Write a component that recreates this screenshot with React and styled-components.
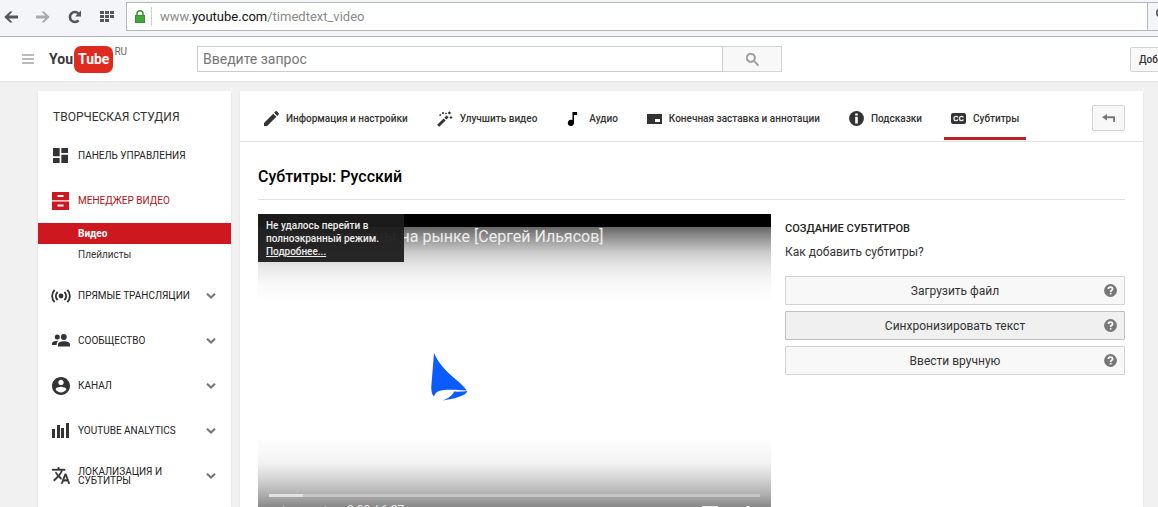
import React from "react";
import styled, { createGlobalStyle } from "styled-components";

const Global = createGlobalStyle`
  *, *::before, *::after { box-sizing: border-box; }
  body { margin: 0; background: #f1f1f1; font-family: Roboto, "Liberation Sans", sans-serif; color: #333; }
  button, input { font-family: inherit; margin: 0; }
  button { cursor: pointer; }
  h1, h2, h3, p, ul { margin: 0; padding: 0; }
  ul { list-style: none; }
  a { color: inherit; text-decoration: none; }
`;

/* ---------- icons ---------- */

const Svg = styled.svg`
  display: block;
  flex: none;
  fill: currentColor;
`;

const Icon = ({ w = 16, h = 16, box = "0 0 24 24", children }) => (
  <Svg width={w} height={h} viewBox={box} aria-hidden="true">{children}</Svg>
);

const ArrowIcon = () => (
  <Icon w={14} h={12} box="0 0 14 12">
    <path d="M6 0.5h2.6L4.8 4.6H14v2.8H4.8l3.8 4.1H6L0.3 6z" />
  </Icon>
);
const ForwardIcon = () => (
  <Icon w={14} h={12} box="0 0 14 12">
    <path d="M8 0.5H5.4l3.8 4.1H0v2.8h9.2l-3.8 4.1H8L13.7 6z" />
  </Icon>
);
const ReloadIcon = () => (
  <Icon w={14} h={14} box="0 0 14 14">
    <path d="M10.6 10.4A5 5 0 1 1 10.4 3.4" fill="none" stroke="currentColor" strokeWidth="2.6" />
    <path d="M13 0.6V6.6H7z" />
  </Icon>
);
const GridIcon = () => (
  <Icon w={14} h={11} box="0 0 14 11">
    <path d="M0 0h4v3H0zM5 0h4v3H5zM10 0h4v3h-4zM0 4h4v3H0zM5 4h4v3H5zM10 4h4v3h-4zM0 8h4v3H0zM5 8h4v3H5z" />
  </Icon>
);
const LockIcon = () => (
  <Icon w={10} h={13} box="0 0 10 13">
    <path d="M2 6V3.8a3 3 0 0 1 6 0V6" fill="none" stroke="#37912f" strokeWidth="1.5" />
    <rect x="0.5" y="5.5" width="9" height="7" fill="#43a63c" stroke="#37912f" />
  </Icon>
);
const MenuIcon = () => (
  <Icon w={12} h={10} box="0 0 12 10">
    <path d="M0 0h12v2H0zM0 4h12v2H0zM0 8h12v2H0z" />
  </Icon>
);
const SearchIcon = () => (
  <Icon w={13} h={13} box="3 3 17.5 17.5">
    <path d="M15.5 14h-.79l-.28-.27C15.41 12.59 16 11.11 16 9.5 16 5.91 13.09 3 9.5 3S3 5.91 3 9.5 5.91 16 9.5 16c1.61 0 3.09-.59 4.23-1.57l.27.28v.79l5 4.99L20.49 19l-4.99-5zm-6 0C7.01 14 5 11.99 5 9.5S7.01 5 9.5 5 14 7.01 14 9.5 11.99 14 9.5 14z" stroke="currentColor" strokeWidth="0.6" />
  </Icon>
);
const DashboardIcon = () => (
  <Icon w={15} h={15} box="3 3 18 18">
    <path d="M3 13h8V3H3v10zm0 8h8v-6H3v6zm10 0h8V11h-8v10zm0-18v6h8V3h-8z" />
  </Icon>
);
const DrawersIcon = () => (
  <Icon w={17} h={18} box="0 0 17 18">
    <path fillRule="evenodd" d="M0 0h17v8.2H0zM5.5 3v2h6V3zM0 9.4h17V18H0zM5.5 12.4v2h6v-2z" />
  </Icon>
);
const LiveIcon = () => (
  <Icon w={20} h={14} box="0 0 20 14">
    <circle cx="10" cy="7" r="2.4" />
    <g fill="none" stroke="currentColor" strokeWidth="1.8">
      <path d="M6.6 3a5.4 5.4 0 0 0 0 8M13.4 3a5.4 5.4 0 0 1 0 8" />
      <path d="M3.6 0.8a9 9 0 0 0 0 12.4M16.4 0.8a9 9 0 0 1 0 12.4" />
    </g>
  </Icon>
);
const PeopleIcon = () => (
  <Icon w={18} h={13} box="0 0 18 13">
    <circle cx="5.3" cy="3" r="2.5" />
    <circle cx="11.8" cy="3" r="2.9" />
    <path d="M6 12.6V10.4C6 8 9 7.2 12 7.2s6 .8 6 3.2v2.2zM0 11V9.4C0 7.6 3 6.6 6.6 6.8 5.2 7.8 4.6 9 4.6 11z" />
  </Icon>
);
const AccountIcon = () => (
  <Icon w={18} h={18} box="2 2 20 20">
    <path d="M12 2C6.48 2 2 6.48 2 12s4.48 10 10 10 10-4.48 10-10S17.52 2 12 2zm0 3c1.66 0 3 1.34 3 3s-1.34 3-3 3-3-1.34-3-3 1.34-3 3-3zm0 14.2c-2.5 0-4.71-1.28-6-3.22.03-1.99 4-3.08 6-3.08 1.99 0 5.97 1.09 6 3.08-1.29 1.94-3.5 3.22-6 3.22z" />
  </Icon>
);
const AnalyticsIcon = () => (
  <Icon w={17} h={15} box="0 0 17 15">
    <path d="M0 6h3v9H0zM5 2h3v13H5zM9 5h3v10H9zM14 0h3v15h-3z" />
  </Icon>
);
const TranslateIcon = () => (
  <Icon w={18} h={17} box="1 2 22 20">
    <path stroke="currentColor" strokeWidth="0.4" d="M12.87 15.07l-2.54-2.51.03-.03c1.74-1.94 2.98-4.17 3.71-6.53H17V4h-7V2H8v2H1v1.99h11.17C11.5 7.92 10.44 9.75 9 11.35 8.07 10.32 7.3 9.19 6.69 8h-2c.73 1.63 1.73 3.17 2.98 4.56l-5.09 5.02L4 19l5-5 3.11 3.11.76-2.04zM18.5 10h-2L12 22h2l1.12-3h4.75L21 22h2l-4.5-12zm-2.62 7l1.62-4.33L19.12 17h-3.24z" />
  </Icon>
);
const ChevronIcon = () => (
  <Icon w={10} h={6} box="0 0 10 6">
    <path d="M1 0.7L5 4.5 9 0.7" fill="none" stroke="currentColor" strokeWidth="2.1" />
  </Icon>
);
const PencilIcon = () => (
  <Icon w={15} h={15} box="3 3 18 18">
    <path d="M3 17.25V21h3.75L17.81 9.94l-3.75-3.75L3 17.25zM20.71 7.04c.39-.39.39-1.02 0-1.41l-2.34-2.34c-.39-.39-1.02-.39-1.41 0l-1.83 1.83 3.75 3.75 1.83-1.83z" />
  </Icon>
);
const WandIcon = () => (
  <Icon w={16} h={16} box="0 0 16 16">
    <path d="M1.2 14.8L7.6 8.4" fill="none" stroke="currentColor" strokeWidth="2.8" />
    <path d="M8.4 7.6L10.6 5.4" fill="none" stroke="currentColor" strokeWidth="2.8" />
    <path d="M12.4 0.2l1.7 1.7-1.7 1.7-1.7-1.7zM6 .8l1.3 1.3L6 3.4 4.7 2.1zM14 4.9l1.5 1.5L14 7.9l-1.5-1.5zM3.2 2.9l1.2 1.2-1.2 1.2L2 4.1zM9 1.6l1 1-1 1-1-1z" />
  </Icon>
);
const NoteIcon = () => (
  <Icon w={16} h={14} box="4 3 20 18">
    <path fill="#000" d="M12 3v10.55c-.59-.34-1.27-.55-2-.55-2.21 0-4 1.79-4 4s1.79 4 4 4 4-1.79 4-4V7h4V3h-6z" />
  </Icon>
);
const EndScreenIcon = () => (
  <Icon w={15} h={10} box="0 0 15 10">
    <path fillRule="evenodd" d="M0 0h15v10H0zM8 5v3h5V5z" />
  </Icon>
);
const InfoIcon = () => (
  <Icon w={15} h={15} box="0 0 15 15">
    <circle cx="7.5" cy="7.5" r="7.4" />
    <path fill="#fff" d="M6.2 2.4h2.6v2.2H6.2zM6.2 5.7h2.6v6.7H6.2z" />
  </Icon>
);
const CcIcon = () => (
  <Icon w={15} h={11} box="0 0 15 11">
    <rect width="15" height="11" rx="2" />
    <path d="M6.8 4.6C6.6 2.9 2.9 2.7 2.9 5.5S6.6 8.1 6.8 6.4M12.3 4.6C12.1 2.9 8.4 2.7 8.4 5.5S12.1 8.1 12.3 6.4" fill="none" stroke="#e4e4e4" strokeWidth="1.4" />
  </Icon>
);
const ReturnIcon = () => (
  <Icon w={13} h={8} box="0 0 13 8">
    <path d="M5 0v2.2H13V8h-1.800V4.200H5v2.400L0 3.300z" />
  </Icon>
);
const HelpIcon = () => (
  <Icon w={13} h={13} box="0 0 13 13">
    <circle cx="6.5" cy="6.5" r="6.4" />
    <path d="M4.4 5.1C4.4 2.4 8.6 2.5 8.6 4.9 8.6 6.3 6.6 6.3 6.6 8" fill="none" stroke="#fff" strokeWidth="1.7" />
    <path fill="#fff" d="M5.8 8.9h1.7v1.6H5.8z" />
  </Icon>
);
const SailIcon = () => (
  <Icon w={37} h={48} box="0 0 37 48">
    <path fill="#0b5cff" d="M3 0C8 12 18 21 28 29 32 33 35 36 35.5 37.4 27 37 14 36 8 38 5 39 4 41 3 43.5 0 41 0 34 .6 30z" />
    <path fill="#0b5cff" d="M23 38.6C29 38.8 34 38.4 36.5 38 35 43 22 46 12 47.5 18 45 22 42 23 38.6z" />
  </Icon>
);
const PlayIcon = () => (
  <Icon w={12} h={16} box="0 0 12 16">
    <path d="M0 0l12 8-12 8z" />
  </Icon>
);
const VolumeIcon = () => (
  <Icon w={16} h={16} box="0 0 16 16">
    <path d="M0 5h4l5-5v16l-5-5H0zM11 4c3 2 3 6 0 8z" />
  </Icon>
);
const SubtitlesIcon = () => (
  <Icon w={16} h={16} box="0 0 16 16">
    <path d="M0 0h16v14H0z" />
  </Icon>
);
const GearIcon = () => (
  <Icon w={16} h={16} box="0 0 16 16">
    <path d="M6.5 0h3v2.5l4 1.5 1.5 4-1.5 4-5.5 3-5.5-3L1 8l1.5-4 4-1.5z" />
  </Icon>
);

/* ---------- browser bar ---------- */

const Page = styled.div`
  height: 100vh;
  overflow: hidden;
  display: flex;
  flex-direction: column;
`;

const BrowserBar = styled.div`
  flex: none;
  display: flex;
  align-items: flex-start;
  height: 37px;
  padding-top: 2px;
  background: #f4f5f8;
  border-bottom: 1px solid #b3b5ba;
  overflow: hidden;
`;

const BrowserNav = styled.nav`
  flex: none;
  display: flex;
  align-items: center;
  gap: 18px;
  width: 126px;
  height: 29px;
  padding-left: 4px;
`;

const BareButton = styled.button`
  display: flex;
  padding: 0;
  border: 0;
  background: none;
  color: ${(p) => p.$color || "#55565a"};
`;

const Address = styled.div`
  flex: 1;
  display: flex;
  align-items: center;
  height: 29px;
  padding-left: 8px;
  background: #fff;
  border: 1px solid #b3b5ba;
`;

const Url = styled.div`
  height: 19px;
  margin-left: 6px;
  padding-left: 8px;
  border-left: 1px solid #cfcfcf;
  font-size: 13px;
  line-height: 19px;
  color: #8a8a8a;
  outline: 0;
  b { font-weight: 400; color: #111; }
`;

const SearchEngine = styled.button`
  flex: none;
  display: flex;
  align-items: center;
  width: 30px;
  height: 29px;
  margin-right: -20px;
  padding: 0 0 4px 8px;
  border: 1px solid #b3b5ba;
  border-left: 0;
  background: #f4f5f8;
  color: #555;
`;

/* ---------- masthead ---------- */

const Masthead = styled.header`
  flex: none;
  display: flex;
  align-items: center;
  height: 45px;
  padding-left: 22px;
  background: #fff;
  border-bottom: 1px solid #e5e5e5;
  overflow: hidden;
`;

const Brand = styled.div`
  flex: none;
  display: flex;
  align-items: center;
  gap: 15px;
  width: 175px;
`;

const Logo = styled.a`
  display: flex;
  align-items: center;
  gap: 1px;
  font-size: 14px;
  line-height: 27px;
  font-weight: 700;
  color: #393536;
`;

const LogoTube = styled.span`
  padding: 0 4px;
  border-radius: 7px;
  background: #e02a20;
  color: #fff;
`;

const Country = styled.sup`
  align-self: flex-start;
  font-size: 10px;
  line-height: 12px;
  font-weight: 400;
  color: #666;
`;

const Search = styled.form`
  flex: 0 1 585px;
  display: flex;
  height: 26px;
`;

const SearchInput = styled.input`
  flex: 1;
  min-width: 0;
  height: 26px;
  padding: 0 5px;
  border: 1px solid #ccc;
  border-radius: 0;
  background: #fff;
  font-size: 14px;
  outline: 0;
  &::placeholder { color: #767676; opacity: 1; }
`;

const SearchButton = styled.button`
  display: flex;
  align-items: center;
  justify-content: center;
  width: 59px;
  padding: 0;
  border: 1px solid #d3d3d3;
  border-left: 0;
  background: #f8f8f8;
  color: #9a9a9a;
`;

const UploadButton = styled.button`
  flex: none;
  width: 112px;
  height: 25px;
  margin: 0 -84px 0 auto;
  padding: 0 8px;
  border: 1px solid #d3d3d3;
  border-radius: 2px;
  background: #f8f8f8;
  font-size: 10px;
  font-weight: 500;
  text-align: left;
  color: #333;
`;

/* ---------- sidebar ---------- */

const Body = styled.div`
  flex: 1;
  min-height: 0;
  display: flex;
  gap: 9px;
  padding: 9px 15px 0 38px;
`;

const Sidebar = styled.nav`
  flex: none;
  width: 193px;
  background: #fff;
  box-shadow: 0 1px 2px rgba(0, 0, 0, 0.1);
  overflow: hidden;
`;

const SidebarTitle = styled.h2`
  padding: 17px 15px 7px;
  font-size: 12px;
  line-height: 18px;
  font-weight: 400;
  color: #333;
`;

const NavLink = styled.a`
  display: flex;
  align-items: center;
  height: 45px;
  padding-right: 15px;
  font-size: 10px;
  line-height: 9px;
  color: ${(p) => (p.$active ? "#b31217" : "#222")};
`;

const NavIcon = styled.span`
  flex: none;
  display: flex;
  justify-content: center;
  width: 45px;
  margin-right: -5px;
  color: ${(p) => (p.$active ? "#cc181e" : "#333")};
`;

const NavText = styled.span`
  flex: 1;
`;

const NavChevron = styled.span`
  color: #777;
`;

const SubList = styled.ul`
  padding-bottom: 8px;
`;

const SubLink = styled.a`
  display: block;
  padding-left: 40px;
  font-size: 10px;
  line-height: 21px;
  font-weight: ${(p) => (p.$active ? 700 : 400)};
  color: ${(p) => (p.$active ? "#fff" : "#333")};
  background: ${(p) => (p.$active ? "#cc181e" : "none")};
`;

/* ---------- main panel ---------- */

const Main = styled.main`
  flex: 1;
  min-width: 0;
  background: #fff;
  box-shadow: 0 1px 2px rgba(0, 0, 0, 0.1);
  overflow: hidden;
`;

const TabBar = styled.div`
  display: flex;
  align-items: flex-start;
  justify-content: space-between;
  height: 51px;
  padding: 0 18px 0 17px;
  border-bottom: 1px solid #e2e2e2;
`;

const Tabs = styled.nav`
  display: flex;
  gap: 15px;
  padding-top: 9px;
`;

const Tab = styled.a`
  display: flex;
  align-items: center;
  gap: 7px;
  height: 40px;
  padding: 0 7px;
  border-bottom: 3px solid ${(p) => (p.$active ? "#b8202a" : "transparent")};
  font-size: 10px;
  font-weight: 500;
  white-space: nowrap;
  color: #333;
`;

const ReturnButton = styled.button`
  display: flex;
  align-items: center;
  justify-content: center;
  width: 33px;
  height: 26px;
  margin-top: 14px;
  padding: 0;
  border: 1px solid #d3d3d3;
  border-radius: 2px;
  background: #f8f8f8;
  color: #777;
`;

const Content = styled.div`
  padding: 0 18px;
`;

const Title = styled.h1`
  height: 58px;
  padding-top: 25px;
  border-bottom: 1px solid #e2e2e2;
  font-size: 16px;
  line-height: 20px;
  font-weight: 500;
  color: #000;
`;

const Columns = styled.div`
  display: grid;
  grid-template-columns: minmax(0, 1fr) 340px;
  gap: 14px;
  padding-top: 14px;
`;

const Player = styled.section`
  position: relative;
  display: flex;
  flex-direction: column;
  height: 312px;
  border-top: 13px solid #000;
  background: #fff;
`;

const PlayerTop = styled.div`
  height: 75px;
  padding: 0 17px;
  background: linear-gradient(#666 0, #9c9c9c 13px, #cdcdcd 26px, #e8e8e8 40px, #f8f8f8 56px, #fff 75px);
  font-size: 16px;
  line-height: 19px;
  color: #eee;
  white-space: nowrap;
`;

const Picture = styled.div`
  flex: 1;
  display: flex;
  padding: 51px 0 0 173px;
`;

const PlayerBottom = styled.div`
  height: 89px;
  padding: 57px 11px 0;
  background: linear-gradient(#fff 0, #f2f2f2 26px, #d2d2d2 43px, #b0b0b0 57px, #888 70px, #777 89px);
`;

const Progress = styled.div`
  height: 3px;
  background: #c4c4c4;
`;

const Loaded = styled.div`
  width: 7%;
  height: 3px;
  background: #e2e2e2;
`;

const Controls = styled.div`
  display: flex;
  align-items: flex-start;
  padding: 6px 4px 0 14px;
  color: #eee;
`;

const ControlButtons = styled.div`
  display: flex;
  gap: 22px;
  padding-top: 3px;
`;

const Time = styled.span`
  flex: 1;
  padding-left: 14px;
  font-size: 12px;
  line-height: 14px;
`;

const Notice = styled.div`
  position: absolute;
  top: -13px;
  left: 0;
  width: 146px;
  padding: 5px 8px 4px;
  background: rgba(28, 28, 28, 0.95);
  font-size: 10px;
  line-height: 13px;
  font-weight: 500;
  color: #eee;
  a { text-decoration: underline; }
`;

const Create = styled.section`
  display: flex;
  flex-direction: column;
`;

const CreateTitle = styled.h3`
  padding-top: 6px;
  font-size: 11px;
  line-height: 18px;
  font-weight: 500;
  color: #222;
`;

const Hint = styled.p`
  padding: 5px 0 15px;
  font-size: 12px;
  line-height: 18px;
  color: #333;
`;

const Actions = styled.div`
  display: flex;
  flex-direction: column;
  gap: 6px;
`;

const Action = styled.button`
  display: grid;
  grid-template-columns: 20px 1fr 20px;
  align-items: center;
  justify-items: center;
  height: 29px;
  padding: 0 4px;
  border: 1px solid ${(p) => (p.$hover ? "#c0c0c0" : "#d3d3d3")};
  border-radius: 1px;
  background: ${(p) => (p.$hover ? "#f0f0f0" : "#f8f8f8")};
  font-size: 12px;
  color: #333;
`;

const ActionLabel = styled.span`
  grid-column: 2;
`;

const ActionHelp = styled.span`
  color: #777;
`;

const studioNav = [
  { text: "ПРЯМЫЕ ТРАНСЛЯЦИИ", icon: <LiveIcon /> },
  { text: "СООБЩЕСТВО", icon: <PeopleIcon /> },
  { text: "КАНАЛ", icon: <AccountIcon /> },
  { text: "YOUTUBE ANALYTICS", icon: <AnalyticsIcon /> },
  { text: <>ЛОКАЛИЗАЦИЯ И<br />СУБТИТРЫ</>, icon: <TranslateIcon /> },
];

const tabs = [
  { text: "Информация и настройки", icon: <PencilIcon /> },
  { text: "Улучшить видео", icon: <WandIcon /> },
  { text: "Аудио", icon: <NoteIcon /> },
  { text: "Конечная заставка и аннотации", icon: <EndScreenIcon /> },
  { text: "Подсказки", icon: <InfoIcon /> },
  { text: "Субтитры", icon: <CcIcon />, active: true },
];

const actions = [
  { text: "Загрузить файл" },
  { text: "Синхронизировать текст", hover: true },
  { text: "Ввести вручную" },
];

const NavItem = ({ text, icon, active, chevron }) => (
  <NavLink href="#" $active={active}>
    <NavIcon $active={active}>{icon}</NavIcon>
    <NavText>{text}</NavText>
    {chevron && <NavChevron><ChevronIcon /></NavChevron>}
  </NavLink>
);

export default function App() {
  return (
    <Page>
      <Global />
      <BrowserBar>
        <BrowserNav>
          <BareButton aria-label="Назад"><ArrowIcon /></BareButton>
          <BareButton aria-label="Вперёд" $color="#a9aaad"><ForwardIcon /></BareButton>
          <BareButton aria-label="Обновить"><ReloadIcon /></BareButton>
          <BareButton aria-label="Экспресс-панель"><GridIcon /></BareButton>
        </BrowserNav>
        <Address>
          <LockIcon />
          <Url role="textbox" aria-label="Адрес" contentEditable suppressContentEditableWarning spellCheck={false}>
            www.<b>youtube.com</b>/timedtext_video
          </Url>
        </Address>
        <SearchEngine aria-label="Поиск"><SearchIcon /></SearchEngine>
      </BrowserBar>

      <Masthead>
        <Brand>
          <BareButton aria-label="Меню" $color="#bbb"><MenuIcon /></BareButton>
          <Logo href="#">You<LogoTube>Tube</LogoTube><Country>RU</Country></Logo>
        </Brand>
        <Search role="search">
          <SearchInput type="text" placeholder="Введите запрос" aria-label="Введите запрос" />
          <SearchButton type="button" aria-label="Найти"><SearchIcon /></SearchButton>
        </Search>
        <UploadButton>Добавить видео</UploadButton>
      </Masthead>

      <Body>
        <Sidebar>
          <SidebarTitle>ТВОРЧЕСКАЯ СТУДИЯ</SidebarTitle>
          <NavItem text="ПАНЕЛЬ УПРАВЛЕНИЯ" icon={<DashboardIcon />} />
          <NavItem text="МЕНЕДЖЕР ВИДЕО" icon={<DrawersIcon />} active />
          <SubList>
            <li><SubLink href="#" $active>Видео</SubLink></li>
            <li><SubLink href="#">Плейлисты</SubLink></li>
          </SubList>
          {studioNav.map((item, i) => <NavItem key={i} {...item} chevron />)}
        </Sidebar>

        <Main>
          <TabBar>
            <Tabs>
              {tabs.map((t) => <Tab key={t.text} href="#" $active={t.active}>{t.icon}{t.text}</Tab>)}
            </Tabs>
            <ReturnButton aria-label="Вернуться"><ReturnIcon /></ReturnButton>
          </TabBar>
          <Content>
            <Title>Субтитры: Русский</Title>
            <Columns>
              <Player>
                <PlayerTop>Движение цены на рынке [Сергей Ильясов]</PlayerTop>
                <Picture><SailIcon /></Picture>
                <PlayerBottom>
                  <Progress><Loaded /></Progress>
                  <Controls>
                    <ControlButtons>
                      <BareButton aria-label="Смотреть" $color="#eee"><PlayIcon /></BareButton>
                      <BareButton aria-label="Звук" $color="#eee"><VolumeIcon /></BareButton>
                    </ControlButtons>
                    <Time>0:00 / 6:27</Time>
                    <ControlButtons>
                      <BareButton aria-label="Субтитры" $color="#eee"><SubtitlesIcon /></BareButton>
                      <BareButton aria-label="Настройки" $color="#eee"><GearIcon /></BareButton>
                    </ControlButtons>
                  </Controls>
                </PlayerBottom>
                <Notice>
                  Не удалось перейти в полноэкранный режим. <a href="#">Подробнее...</a>
                </Notice>
              </Player>
              <Create>
                <CreateTitle>СОЗДАНИЕ СУБТИТРОВ</CreateTitle>
                <Hint>Как добавить субтитры?</Hint>
                <Actions>
                  {actions.map((a) => (
                    <Action key={a.text} $hover={a.hover}>
                      <ActionLabel>{a.text}</ActionLabel>
                      <ActionHelp><HelpIcon /></ActionHelp>
                    </Action>
                  ))}
                </Actions>
              </Create>
            </Columns>
          </Content>
        </Main>
      </Body>
    </Page>
  );
}
